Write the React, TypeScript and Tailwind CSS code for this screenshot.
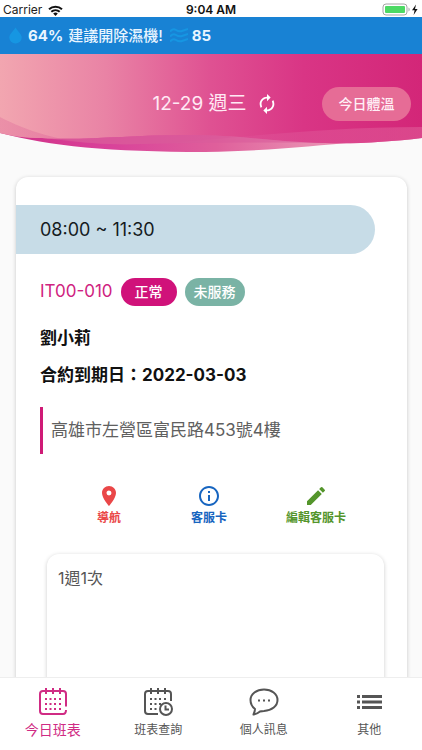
import React from "react";
import { MdAutorenew, MdPlace, MdInfoOutline, MdEdit } from "react-icons/md";

function StatusBar() {
  return (
    <div className="relative flex h-[17px] shrink-0 items-center justify-between bg-white px-[3px] text-xs leading-4 text-[#222]">
      <div className="flex items-center gap-[6px] pt-[3px]">
        <span>Carrier</span>
        <svg width="15" height="11" viewBox="0 0 15 11" fill="none" stroke="#111" strokeWidth="2">
          <path d="M1 4.2a9.5 9.5 0 0 1 13 0M3.3 6.8a6.2 6.2 0 0 1 8.4 0" />
          <path d="M7.5 11 5.2 8.5a3.4 3.4 0 0 1 4.6 0z" fill="#111" stroke="none" />
        </svg>
      </div>
      <span className="absolute inset-x-0 top-[2px] text-center font-semibold text-[#111]">9:04 AM</span>
      <svg width="37" height="13" viewBox="0 0 37 13" className="mt-[2px]">
        <rect x="1" y="1" width="24" height="11" rx="3" fill="#fff" stroke="#a5a5a5" />
        <rect x="3" y="3" width="20" height="7" rx="1" fill="#4cd964" />
        <path d="M26.5 4.5c1.6.6 1.6 3.4 0 4z" fill="#a5a5a5" />
        <path d="M34 1.5 30 7.2h2.6L31.6 12l4-5.9H33z" fill="#111" />
      </svg>
    </div>
  );
}

function ClimateBanner() {
  return (
    <div className="flex h-[37px] shrink-0 items-center bg-[#1882d4] px-[9px] text-[15px] leading-5 font-bold text-[#e9f5ff]">
      <svg width="13" height="17" viewBox="0 0 13 17" className="mr-[6px]">
        <path d="M6.5.5C8.3 4 12.7 7 12.7 10.6a6.2 6 0 0 1-12.4 0C.3 7 4.7 4 6.5.5z" fill="#1696e2" />
      </svg>
      <span>64%</span>
      <span className="ml-[5px] font-medium">建議開除濕機!</span>
      <svg width="18" height="15" viewBox="0 0 18 15" className="mr-[4px] ml-[7px]" fill="none" stroke="#1696e2" strokeWidth="2">
        <path d="M0 3.500q3-3.500 6-1.500t6 1 6-2M0 8.500q3-3.500 6-1.500t6 1 6-2M0 13.500q3-3.500 6-1.500t6 1 6-2" />
      </svg>
      <span>85</span>
    </div>
  );
}

function Waves() {
  return (
    <svg className="absolute inset-0 h-full w-full" viewBox="0 0 422 99" preserveAspectRatio="none" aria-hidden="true">
      <defs>
        <linearGradient id="wave-main">
          <stop offset="0" stopColor="#f2a6b0" />
          <stop offset="0.25" stopColor="#e983a5" />
          <stop offset="0.5" stopColor="#df5192" />
          <stop offset="0.72" stopColor="#d93585" />
          <stop offset="1" stopColor="#d32678" />
        </linearGradient>
        <linearGradient id="wave-deep">
          <stop offset="0" stopColor="#d02f86" />
          <stop offset="0.3" stopColor="#d9429a" />
          <stop offset="0.6" stopColor="#df5f9b" />
          <stop offset="0.85" stopColor="#e88bb0" />
        </linearGradient>
        <linearGradient id="wave-veil">
          <stop offset="0" stopColor="#e0709c" stopOpacity="0.4" />
          <stop offset="0.5" stopColor="#dd4c95" stopOpacity="0.5" />
          <stop offset="1" stopColor="#e05c98" stopOpacity="0.6" />
        </linearGradient>
      </defs>
      <path d="M0 79C50 92 110 98 205 98C270 97 310 92 360 88L360 60H0z" fill="url(#wave-deep)" />
      <path d="M0 0H422V84C390 88 355 90 325 89C275 88 245 81 185 81C130 81 80 87 42 84C25 84 12 82 0 79z" fill="url(#wave-main)" />
      <path d="M0 63C25 76 60 89 110 90C190 92 290 73 422 73V84C390 88 355 90 325 89C275 88 245 81 185 81C130 81 80 87 42 84C25 84 12 82 0 79z" fill="url(#wave-veil)" />
      <path d="M42 84C80 87 130 81 185 81C245 81 275 88 325 89C250 88 190 89 145 90C105 92 70 87 42 84z" fill="#d95b9b" fillOpacity="0.6" />
    </svg>
  );
}

function Hero() {
  return (
    <header className="relative h-[99px] shrink-0">
      <Waves />
      <div className="relative grid h-[99px] grid-cols-[1fr_auto_1fr] items-center pr-[11px] pl-[19px]">
        <span />
        <div className="flex items-center gap-[9px] text-[19px] leading-6 text-[#ffe9f4]">
          <h1>12-29 週三</h1>
          <button type="button" aria-label="重新整理">
            <MdAutorenew size={22} color="#fff" />
          </button>
        </div>
        <button type="button" className="h-[34px] w-[89px] justify-self-end rounded-full bg-[#e66c96] text-sm font-medium text-[#fff0f6]">
          今日體溫
        </button>
      </div>
    </header>
  );
}

function Action({ icon, label, tone }: { icon: React.ReactNode; label: string; tone: string }) {
  return (
    <button type="button" className={`flex flex-col items-center text-xs leading-5 font-bold ${tone}`}>
      {icon}
      <span>{label}</span>
    </button>
  );
}

function VisitCard() {
  return (
    <article className="mr-[15px] ml-[16px] mt-[24px] min-h-[600px] rounded-xl bg-white pt-[28px] shadow-[0_1px_4px_rgba(0,0,0,0.2)]">
      <div className="mr-8 flex h-[49px] items-center rounded-r-full bg-[#c7dce7] pl-6 text-lg text-[#151b1e]">
        08:00 ~ 11:30
      </div>
      <div className="px-6">
        <div className="mt-[24px] flex h-[28px] items-center gap-2">
          <span className="text-[17px] text-[#cf2380]">IT00-010</span>
          <span className="flex h-[28px] w-[56px] items-center justify-center rounded-full bg-[#d0127a] text-sm font-medium text-white">正常</span>
          <span className="flex h-[28px] w-[60px] items-center justify-center rounded-full bg-[#7ab3a5] text-sm font-medium text-white">未服務</span>
        </div>
        <h2 className="mt-5 text-[17px] leading-6 font-bold text-[#111]">劉小莉</h2>
        <p className="mt-[13px] text-[17px] leading-6 font-bold text-[#111]">合約到期日：2022-03-03</p>
        <p className="mt-5 flex h-[47px] items-center border-l-[3px] border-[#cf1a76] pl-2 text-[17px] text-[#606060]">
          高雄市左營區富民路453號4樓
        </p>
      </div>
      <div className="mt-[30px] grid grid-cols-[100fr_100fr_114fr] pr-[34px] pl-[43px]">
        <Action icon={<MdPlace size={24} />} label="導航" tone="text-[#ea4748]" />
        <Action icon={<MdInfoOutline size={24} />} label="客服卡" tone="text-[#1765c0]" />
        <Action icon={<MdEdit size={24} />} label="編輯客服卡" tone="text-[#54952b]" />
      </div>
      <div className="mt-[26px] mr-[23px] ml-[31px] min-h-[240px] rounded-xl bg-white px-[11px] pt-[12px] text-base leading-6 text-[#555] shadow-[0_1px_4px_rgba(0,0,0,0.2)]">
        1週1次
      </div>
    </article>
  );
}

function CalendarIcon({ clock = false }: { clock?: boolean }) {
  const dots = [12, 17, 22].flatMap((y) => [8, 12.5, 17, 22].map((x) => [x, y]));
  return (
    <svg width="30" height="30" viewBox="0 0 30 30" fill="none" stroke="currentColor" strokeWidth="2">
      {clock ? (
        <path d="M28 14V7q0-3-3-3H5q-3 0-3 3v17q0 3 3 3h10" />
      ) : (
        <path d="M28 19.500V7q0-3-3-3H5q-3 0-3 3v17q0 3 3 3h20q3 0 3-4" />
      )}
      <path d="M8 1v6M15 1v6M22 1v6" />
      {dots
        .filter(([x, y]) => !clock || x + y < 36)
        .map(([x, y]) => (
          <rect key={`${x}-${y}`} x={x - 1} y={y - 1} width="2" height="2" fill="currentColor" stroke="none" />
        ))}
      {clock && <circle cx="23" cy="22" r="6" />}
      {clock && <path d="M22.500 18.500v4H26" />}
    </svg>
  );
}

function ChatIcon() {
  return (
    <svg width="30" height="30" viewBox="0 0 30 30" fill="none" stroke="currentColor" strokeWidth="2" strokeLinejoin="round">
      <path d="M15 2.500c7.700 0 13.500 4.500 13.500 10.500S23 23.500 15 24q-3 0-4 .5-3 2.500-6.500 3 1.500-3.500 1.500-5.500-4.500-3.500-4.500-9C1.500 7 7.500 2.500 15 2.500z" />
      <path d="M9 13.500h2M14 13.500h2M19 13.500h2" />
    </svg>
  );
}

function ListIcon() {
  return (
    <svg width="30" height="30" viewBox="0 0 30 30" fill="none" stroke="currentColor" strokeWidth="3">
      <path d="M3 9.500h3M8 9.500h20M3 15h3M8 15h20M3 20.500h3M8 20.500h20" />
    </svg>
  );
}

const tabs = [
  { label: "今日班表", icon: <CalendarIcon />, style: "text-sm text-[#d02b84]" },
  { label: "班表查詢", icon: <CalendarIcon clock />, style: "text-xs text-[#555]" },
  { label: "個人訊息", icon: <ChatIcon />, style: "text-xs text-[#555]" },
  { label: "其他", icon: <ListIcon />, style: "text-xs text-[#555]" },
];

export default function App() {
  return (
    <div className="flex h-screen flex-col overflow-hidden bg-[#fafafa] font-['Inter','Noto_Sans_CJK_TC',sans-serif]">
      <StatusBar />
      <ClimateBanner />
      <Hero />
      <main className="min-h-0 flex-1 overflow-hidden">
        <VisitCard />
      </main>
      <nav className="grid h-[73px] shrink-0 grid-cols-4 border-t border-[#eee] bg-white">
        {tabs.map((tab) => (
          <button key={tab.label} type="button" className={`flex flex-col items-center pt-[9px] ${tab.style}`}>
            {tab.icon}
            <span className="mt-[3px] leading-5">{tab.label}</span>
          </button>
        ))}
      </nav>
    </div>
  );
}
